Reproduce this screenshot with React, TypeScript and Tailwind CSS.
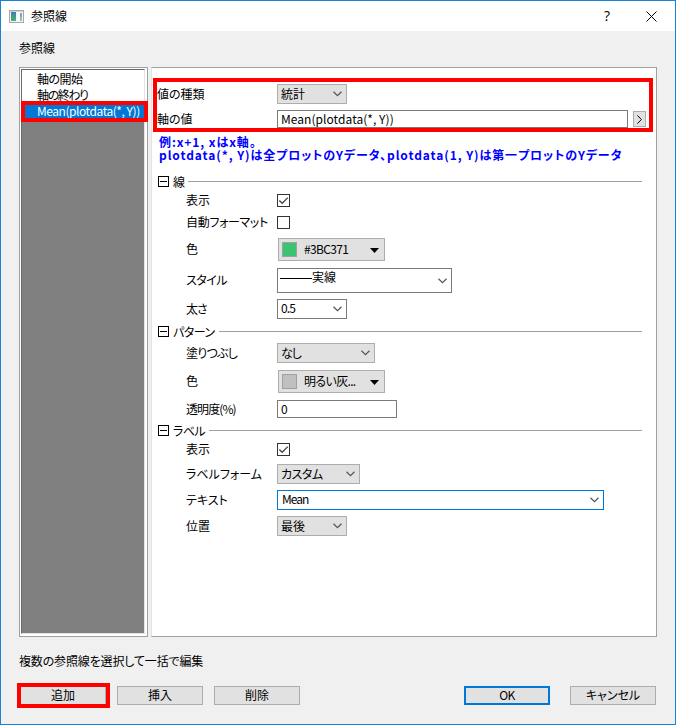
import React from 'react';
import clsx from 'clsx';

const Chevron = () => (
  <svg className="w-[9px] h-[6px] shrink-0" viewBox="0 0 9 6" fill="none" stroke="#555" strokeWidth="1.2">
    <path d="M0.5 0.8 L4.5 4.6 L8.5 0.8" />
  </svg>
);

interface ComboProps {
  className: string;
  children: React.ReactNode;
}

const Combo: React.FC<ComboProps> = ({ className, children }) => (
  <div className={clsx('flex items-center justify-between border pl-[3px] pr-1 shrink-0', className)}>
    <span className="flex items-center">{children}</span>
    <Chevron />
  </div>
);

const Checkbox: React.FC<{ checked?: boolean }> = ({ checked }) => (
  <div className="w-[13px] h-[13px] border border-[#333] bg-white shrink-0">
    {checked && (
      <svg className="w-[11px] h-[11px]" viewBox="0 0 11 11" fill="none" stroke="#444" strokeWidth="1.3">
        <path d="M1.3 5.5 L4.2 8.3 L9.8 2.6" />
      </svg>
    )}
  </div>
);

interface ColorButtonProps {
  swatch: string;
  children: React.ReactNode;
}

const ColorButton: React.FC<ColorButtonProps> = ({ swatch, children }) => (
  <div className="ml-px w-[107px] h-[23px] flex items-center border border-[#adadad] bg-[#e1e1e1] pl-[3px] pr-[5px]">
    <div className={clsx('w-[15px] h-[15px] border border-[#a0a0a0] shrink-0', swatch)} />
    <span className="ml-[7px] flex-1 pb-0.5 tracking-[-0.65px]">{children}</span>
    <svg className="w-[9px] h-[5px] mt-0.5" viewBox="0 0 9 5">
      <path d="M0 0 H9 L4.5 5 Z" fill="#000" />
    </svg>
  </div>
);

interface RowProps {
  label: string;
  className: string;
  labelClass?: string;
  children: React.ReactNode;
}

const Row: React.FC<RowProps> = ({ label, className, labelClass, children }) => (
  <div className={clsx('flex items-center pl-[34px]', className)}>
    <span className={clsx('w-[91px] shrink-0 pb-px', labelClass)}>{label}</span>
    {children}
  </div>
);

interface SectionHeadProps {
  title: string;
  className: string;
  titleClass: string;
}

const SectionHead: React.FC<SectionHeadProps> = ({ title, className, titleClass }) => (
  <div className={clsx('flex items-center h-3 pl-1.5 pr-3.5', className)}>
    <svg className="w-[11px] h-[11px] shrink-0 mb-px" viewBox="0 0 11 11" fill="none" stroke="#000" shapeRendering="crispEdges">
      <path d="M0.5 0.5 H10.5 V10.5 H0.5 Z M2 5.5 H9" />
    </svg>
    <span className={clsx('ml-1 shrink-0', titleClass)}>{title}</span>
    <div className="h-px flex-1 bg-[#a0a0a0] -mt-px" />
  </div>
);

const PushButton: React.FC<{ className: string; children: React.ReactNode }> = ({ className, children }) => (
  <button className={clsx('w-[86px] h-[19px] flex items-center justify-center pb-0.5 bg-[#e1e1e1]', className)}>
    {children}
  </button>
);

export default function App() {
  return (
    <div className="relative w-[676px] h-[725px] flex flex-col border border-[#1883d7] bg-[#f0f0f0] text-black text-[12px] leading-[12px] whitespace-nowrap font-['Noto_Sans_CJK_JP',sans-serif] [font-feature-settings:'palt']">
      <div className="h-[30px] shrink-0 bg-white flex items-center pl-2 pr-[18px]">
        <svg className="w-[15px] h-[13px]" viewBox="0 0 15 13">
          <defs>
            <linearGradient id="pane" x1="0" y1="0" x2="0" y2="1">
              <stop offset="0" stopColor="#3f7db5" />
              <stop offset="1" stopColor="#4fae72" />
            </linearGradient>
          </defs>
          <rect x="0.5" y="0.5" width="14" height="12" fill="#f4f4f4" stroke="#a8a8a8" />
          <rect x="1" y="1" width="13" height="1" fill="#c9d3dc" />
          <rect x="2" y="2" width="5" height="9" fill="url(#pane)" />
          <rect x="8" y="2" width="3" height="9" fill="#f8fafb" />
          <rect x="11" y="3" width="2" height="4" fill="#7f9fd0" />
          <rect x="11" y="7" width="2" height="4" fill="#8fc4a4" />
        </svg>
        <span className="ml-[7px] flex-1">参照線</span>
        <span className="w-[10px] text-center text-[14px] font-['Open_Sans',sans-serif]">?</span>
        <svg className="ml-[34px] w-[11px] h-[11px]" viewBox="0 0 11 11" fill="none" stroke="#000">
          <path d="M0.5 0.5 L10.5 10.5 M10.5 0.5 L0.5 10.5" />
        </svg>
      </div>

      <div className="h-[36px] shrink-0 pt-[11px] pl-[18px]">参照線</div>

      <div className="flex h-[570px] shrink-0 pl-[18px] pr-[18px]">
        <div className="w-[129px] border border-[#a0a0a0] bg-white pt-px pl-px pr-0.5 pb-0.5">
          <div className="h-[565px] border border-t-[#696969] border-l-[#696969] border-r-[#e3e3e3] border-b-[#e3e3e3] bg-[#808080]">
            <div className="bg-white pt-px">
              <div className="h-4 flex items-center pl-[15px] pb-px tracking-[-0.5px]">軸の開始</div>
              <div className="h-4 flex items-center pl-[15px] tracking-[-1.4px]">軸の終わり</div>
              <div className="h-4 flex items-center pl-[15px] bg-[#0078d7] text-white tracking-[-0.45px]">
                Mean(plotdata(*, Y))
              </div>
            </div>
          </div>
        </div>

        <div className="ml-[3px] flex-1 border border-[#a0a0a0] border-l-[#e3e3e3] bg-white">
          <div className="mt-4 h-5 flex items-center pl-[5px]">
            <span className="w-[120px]">値の種類</span>
            <Combo className="w-[70px] h-5 border-[#adadad] bg-[#e1e1e1]">統計</Combo>
          </div>
          <div className="mt-1.5 h-[18px] flex items-center pl-[5px]">
            <span className="w-[120px]">軸の値</span>
            <div className="w-[351px] h-[18px] border border-[#7a7a7a] pl-[3px] flex items-center tracking-[0.05px]">
              Mean(plotdata(*, Y))
            </div>
            <div className="ml-[5px] w-[13px] h-4 border border-[#adadad] bg-[#e1e1e1] flex items-center justify-center">
              <svg className="w-[5px] h-[9px]" viewBox="0 0 5 9" fill="none" stroke="#000">
                <path d="M0.4 0.4 L4.4 4.5 L0.4 8.6" />
              </svg>
            </div>
          </div>

          <div className="mt-[7px] pl-[7px] text-[#0000ff] font-bold leading-[13px] tracking-[0.91px]">
            <p>例:x+1, xはx軸。</p>
            <p>plotdata(*, Y)は全プロットのYデータ、plotdata(1, Y)は第一プロットのYデータ</p>
          </div>

          <SectionHead title="線" className="mt-[15px]" titleClass="mr-[3px]" />
          <Row label="表示" className="mt-1.5 h-[13px]"><Checkbox checked /></Row>
          <Row label="自動フォーマット" className="mt-[9px] h-[13px]" labelClass="tracking-[-0.35px]"><Checkbox /></Row>
          <Row label="色" className="mt-[9px] h-[23px]">
            <ColorButton swatch="bg-[#3bc371]">#3BC371</ColorButton>
          </Row>
          <Row label="スタイル" className="mt-[7px] h-[25px]" labelClass="tracking-[-0.5px]">
            <Combo className="w-[175px] h-[25px] border-[#7a7a7a] bg-white">
              <span className="w-8 h-px bg-black -ml-px -mt-[5px]" />
              <span className="-mt-[7px]">実線</span>
            </Combo>
          </Row>
          <Row label="太さ" className="mt-1.5 h-5" labelClass="tracking-[-1px]">
            <Combo className="w-[70px] h-5 border-[#7a7a7a] bg-white">
              <span className="pb-0.5 tracking-[-0.9px]">0.5</span>
            </Combo>
          </Row>

          <SectionHead title="パターン" className="mt-[7px]" titleClass="mr-1 tracking-[-0.5px]" />
          <Row label="塗りつぶし" className="mt-[5px] h-5" labelClass="tracking-[-0.8px]">
            <Combo className="w-[98px] h-5 border-[#adadad] bg-[#e1e1e1]">
              <span className="pb-px tracking-[-1px]">なし</span>
            </Combo>
          </Row>
          <Row label="色" className="mt-[7px] h-[23px]">
            <ColorButton swatch="bg-[#c0c0c0]">明るい灰...</ColorButton>
          </Row>
          <Row label="透明度(%)" className="mt-[7px] h-[18px]" labelClass="tracking-[-0.9px]">
            <div className="w-[120px] h-[18px] border border-[#7a7a7a] pl-[3px] pb-px flex items-center">0</div>
          </Row>

          <SectionHead title="ラベル" className="mt-[7px]" titleClass="mr-1 tracking-[-0.6px]" />
          <Row label="表示" className="mt-1.5 h-[13px]"><Checkbox checked /></Row>
          <Row label="ラベルフォーム" className="mt-2 h-5">
            <Combo className="w-[83px] h-5 border-[#adadad] bg-[#e1e1e1]">
              <span className="tracking-[-0.5px]">カスタム</span>
            </Combo>
          </Row>
          <Row label="テキスト" className="mt-1.5 h-5">
            <Combo className="w-[327px] h-5 border-[#0078d7] bg-white">
              <span className="pl-px pb-0.5 tracking-[-1px]">Mean</span>
            </Combo>
          </Row>
          <Row label="位置" className="mt-1.5 h-5">
            <Combo className="w-[70px] h-5 border-[#adadad] bg-[#e1e1e1]">最後</Combo>
          </Row>
        </div>
      </div>

      <div className="mt-[18px] pl-[18px] tracking-[-0.15px]">複数の参照線を選択して一括で編集</div>

      <div className="mt-[19px] flex pl-[19px] pr-[19px]">
        <PushButton className="border border-[#adadad]">追加</PushButton>
        <PushButton className="ml-[11px] border border-[#adadad]">挿入</PushButton>
        <PushButton className="ml-[11px] border border-[#adadad]">削除</PushButton>
        <PushButton className="ml-auto border-2 border-[#0078d7] tracking-[-0.5px]">OK</PushButton>
        <PushButton className="ml-5 border border-[#adadad]">キャンセル</PushButton>
      </div>

      {/* highlight frames */}
      <div className="absolute left-5 top-[100px] w-[127px] h-[21px] border-4 border-[#ff0000]" />
      <div className="absolute left-[152px] top-[77px] w-[500px] h-[54px] border-4 border-[#ff0000]" />
      <div className="absolute left-4 top-[682px] w-[93px] h-[25px] border-4 border-[#ff0000]" />
    </div>
  );
}
